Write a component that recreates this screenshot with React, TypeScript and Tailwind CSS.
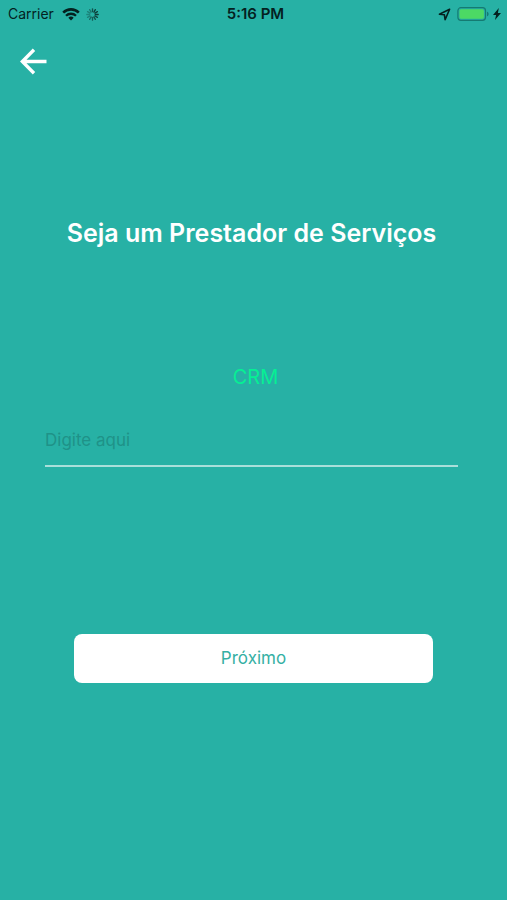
import React, { useState } from 'react';

const WifiIcon = () => (
  <svg width="18" height="13" viewBox="0 0 18 13" fill="none" aria-hidden="true">
    <path d="M1.2 4.6a11.1 11.1 0 0 1 15.6 0" stroke="#04211f" strokeWidth="2.6" />
    <path d="M4 7.8a7.1 7.1 0 0 1 10 0" stroke="#04211f" strokeWidth="2.3" />
    <path d="M9 12.4 6.3 9.8a3.9 3.9 0 0 1 5.4 0Z" fill="#04211f" />
  </svg>
);

// Spokes go clockwise from the top, each with its own opacity
const SPOKES = [0.8, 1, 1, 1, 0.9, 0.8, 0.7, 0.6, 0.4, 0.35, 0.4, 0.5];

const ActivityIcon = () => (
  <svg width="13" height="13" viewBox="0 0 13 13" aria-hidden="true">
    {SPOKES.map((opacity, i) => (
      <line
        key={i}
        x1="6.5"
        y1="0.8"
        x2="6.5"
        y2="3.7"
        stroke="#0d3b38"
        strokeWidth="1.3"
        strokeLinecap="round"
        opacity={opacity}
        transform={`rotate(${i * 30} 6.5 6.5)`}
      />
    ))}
  </svg>
);

const LocationIcon = () => (
  <svg width="13" height="13" viewBox="0 0 13 13" fill="none" aria-hidden="true">
    <path d="M11.6 1.2 1.4 6.2l5 .6.7 4.900Z" stroke="#04211f" strokeWidth="1.6" strokeLinejoin="round" />
  </svg>
);

const BatteryIcon = () => (
  <svg width="32" height="14" viewBox="0 0 32 14" aria-hidden="true">
    <rect x="0.9" y="0.7" width="27.6" height="12.6" rx="3" fill="none" stroke="#157a72" strokeWidth="1.2" />
    <rect x="2.5" y="2.3" width="24.4" height="9.4" rx="1.6" fill="#4cd964" />
    <path d="M30 4.8c1 .3 1.6 1.1 1.6 2.2S31 8.9 30 9.2Z" fill="#157a72" />
  </svg>
);

const BoltIcon = () => (
  <svg width="8" height="12" viewBox="0 0 8 12" aria-hidden="true">
    <path d="M5.8 0 0 6.9h3.1L2 12 8 4.9H4.9Z" fill="#04211f" />
  </svg>
);

const StatusBar: React.FC = () => (
  <div className="grid h-7 grid-cols-3 items-center text-[#04211f]">
    <div className="flex items-center pl-2">
      <span className="text-sm">Carrier</span>
      <span className="ml-2"><WifiIcon /></span>
      <span className="ml-1.5"><ActivityIcon /></span>
    </div>
    <div className="pl-1 text-center text-[15px] leading-5 font-semibold">5:16 PM</div>
    <div className="flex items-center justify-end pr-1.5">
      <LocationIcon />
      <span className="ml-1.5 mr-1"><BatteryIcon /></span>
      <BoltIcon />
    </div>
  </div>
);

export default function App() {
  const [crm, setCrm] = useState('');

  return (
    <div className="min-h-screen bg-[#27b1a5] font-['Inter','Liberation_Sans',sans-serif]">
      <StatusBar />

      <header className="flex px-5 pt-5">
        <button type="button" aria-label="Voltar" className="text-white">
          <svg width="28" height="28" viewBox="0 0 28 28" fill="none" aria-hidden="true">
            <path d="M26.5 13.5H3M14 1.8 2.3 13.5 14 25.2" stroke="currentColor" strokeWidth="3.4" />
          </svg>
        </button>
      </header>

      <form onSubmit={(e) => e.preventDefault()}>
        <h1 className="mt-[141px] pr-1 text-center text-[25px] leading-8 font-semibold text-white">
          Seja um Prestador de Serviços
        </h1>

        <div className="mt-28 pl-[45px] pr-[49px]">
          <label htmlFor="crm" className="block pl-2 text-center text-xl leading-8 text-[#06ef94]">
            CRM
          </label>
          <input
            id="crm"
            type="text"
            value={crm}
            onChange={(e) => setCrm(e.target.value)}
            placeholder="Digite aqui"
            className="mt-5 block h-[54px] w-full border-b-2 border-[#a9dfda] bg-transparent pt-0.5 text-[17px] text-white outline-none placeholder:text-[#1f9288]"
          />
        </div>

        <div className="mt-[167px] px-18.5">
          <button type="submit" className="h-[49px] w-full rounded-lg bg-white text-[17px] text-[#35b0a4]">
            Próximo
          </button>
        </div>
      </form>
    </div>
  );
}
